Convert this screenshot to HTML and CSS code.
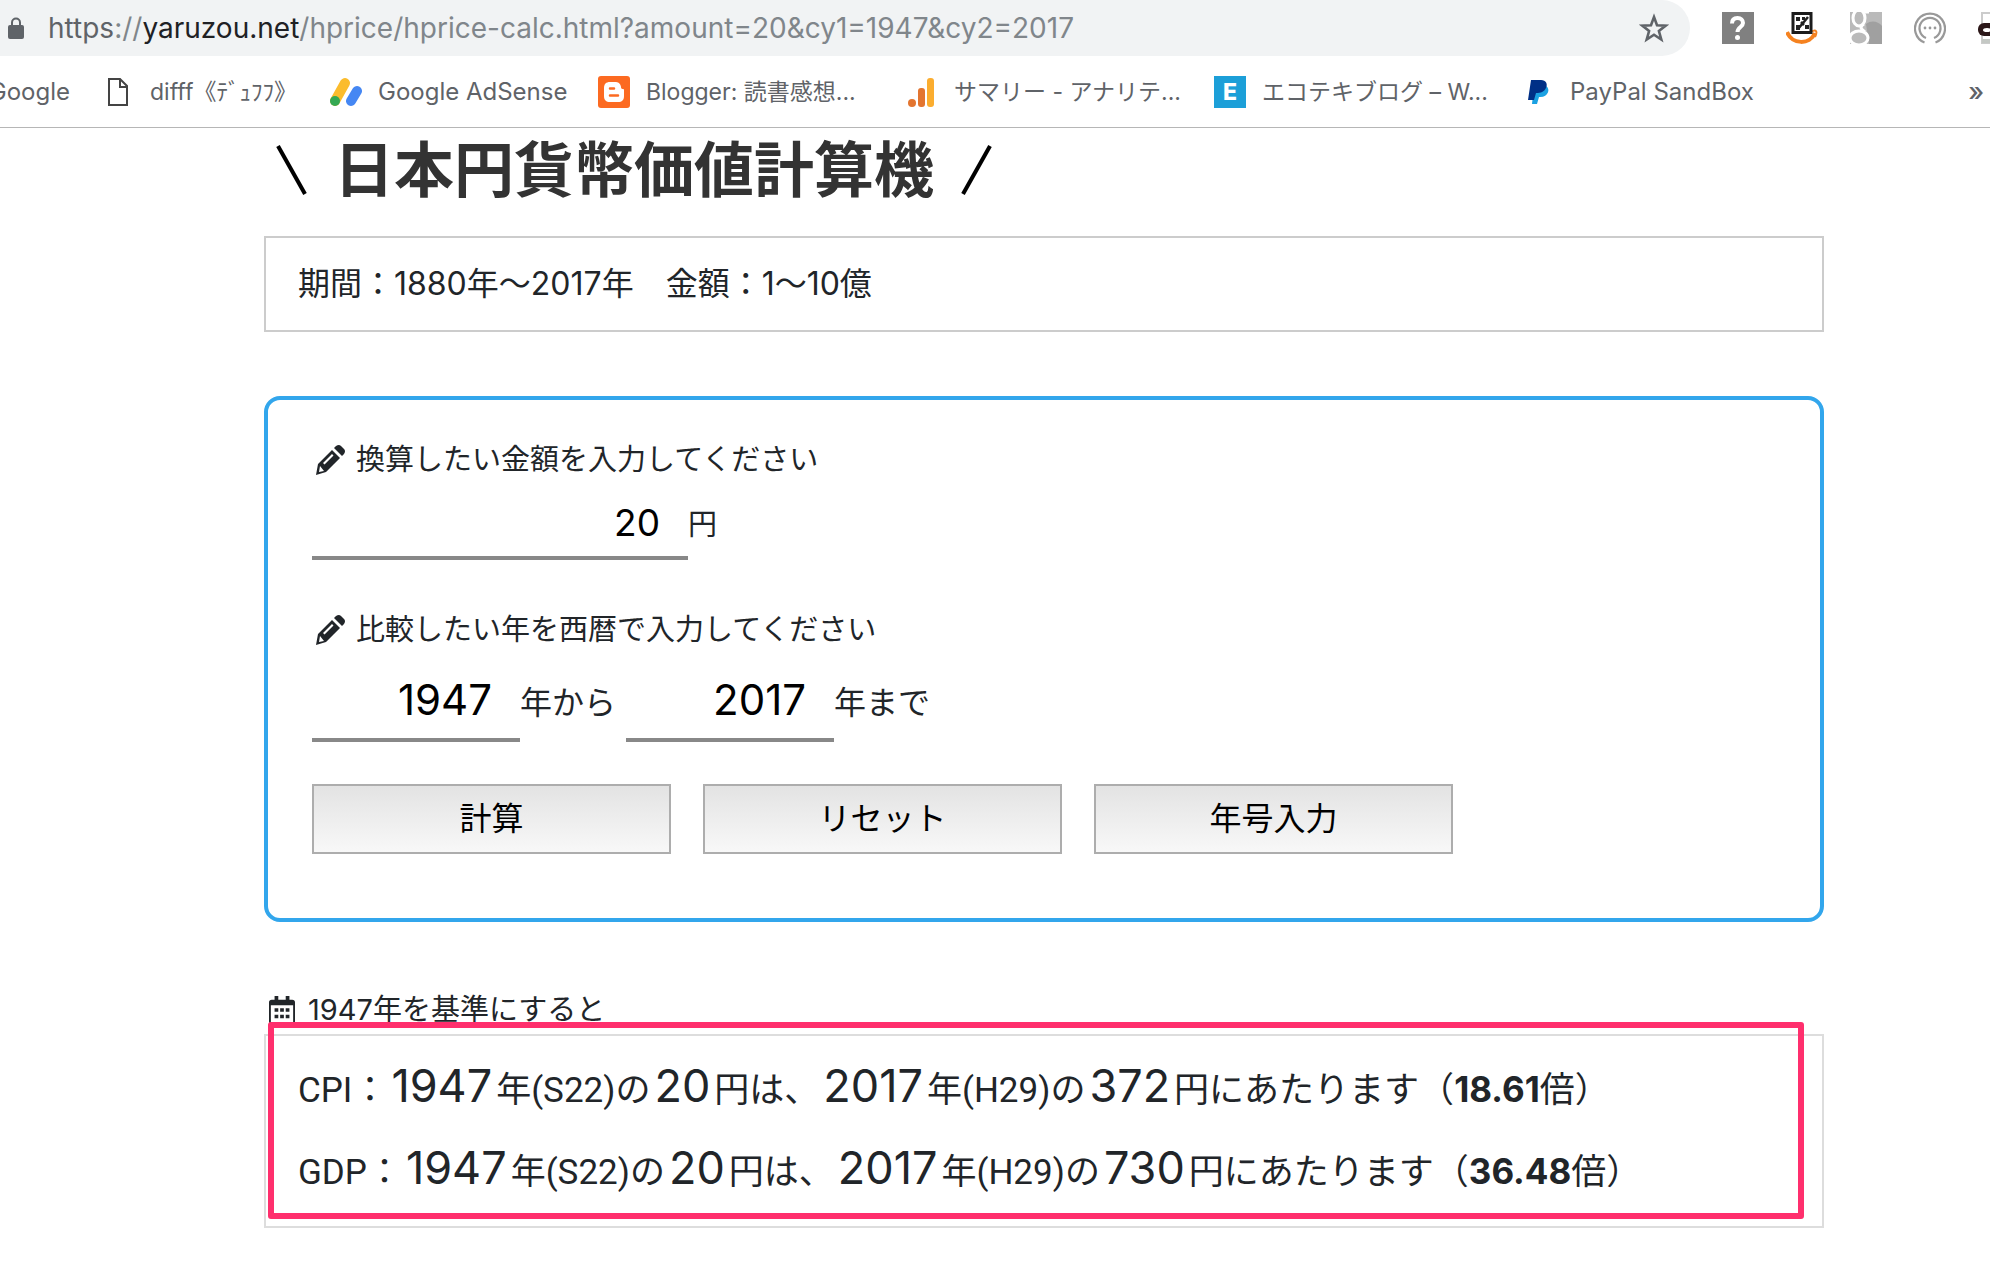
FILE: index.html
```html
<!DOCTYPE html>
<html lang="ja">
<head>
<meta charset="utf-8">
<title>日本円貨幣価値計算機</title>
<link rel="stylesheet" href="styles.css">
</head>
<body>
<header class="browser">
  <div class="toolbar">
    <div class="address">
      <svg class="lock" width="18" height="30" viewBox="0 0 18 30" aria-hidden="true"><path d="M4 14V9.500a4 4 0 0 1 8 0V14" fill="none" stroke="#5f6368" stroke-width="2"/><rect x="0" y="12" width="16" height="14" rx="2" fill="#5f6368"/></svg>
      <span class="url"><span class="scheme">https</span>://<span class="host">yaruzou.net</span>/hprice/hprice-calc.html?amount=20&amp;cy1=1947&amp;cy2=2017</span>
      <svg class="star" width="30" height="30" viewBox="0 0 30 30" aria-hidden="true"><path d="M15 4l3 8.200 8.700.4-6.800 5.400 2.400 8.500L15 21.700l-7.300 4.800L10.100 18l-6.800-5.400 8.700-.4z" fill="none" stroke="#5f6368" stroke-width="2.600"/></svg>
    </div>
    <div class="extensions">
      <svg width="32" height="32" viewBox="0 0 32 32" aria-hidden="true"><path d="M0 0h32v32H0z" fill="#808080"/><path d="M10 11.500c0-3.500 2-5.500 5.500-5.500s5.500 2 5.500 5c0 4-5.500 4-5.500 9" fill="none" stroke="#fff" stroke-width="4"/><circle cx="15.500" cy="25.500" r="2.500" fill="#fff"/></svg>
      <svg width="32" height="32" viewBox="0 0 32 32" aria-hidden="true"><path d="M1 20c5 13 23 13 28 1" fill="none" stroke="#f58220" stroke-width="4"/><path d="M25 20c5-3 7-1 4 5" fill="none" stroke="#f58220" stroke-width="2"/><rect x="7" y="1.500" width="18" height="19" fill="#fff" stroke="#1c1c1c" stroke-width="3"/><path d="M10 5h4v4h-4zM16 5h3v3h-3zM10 13h4v5h-4zM19 13h4v4h-4z" fill="#222"/><path d="M22 5L12 17M15 10l3 3" stroke="#222" stroke-width="2.500"/></svg>
      <svg width="32" height="32" viewBox="0 0 32 32" aria-hidden="true"><path d="M0 0h32v32H0z" fill="#bababa"/><path d="M16 12c5-4 12-3 16 2v18H19z" fill="#a0a0a0"/><ellipse cx="9" cy="6" rx="6" ry="8" fill="#bababa" stroke="#fff" stroke-width="3"/><ellipse cx="9" cy="26" rx="9" ry="7" fill="#bababa" stroke="#fff" stroke-width="3"/><path d="M13 0h6M14 12c-5 3-3 5 1 8" fill="none" stroke="#fff" stroke-width="3"/></svg>
      <svg width="32" height="32" viewBox="0 0 32 32" aria-hidden="true"><g fill="none" stroke="#999" stroke-width="2.200"><path d="M10.500 30.500a15 15 0 1 1 11 0"/><path d="M12 26a10.500 10.500 0 1 1 8 0"/></g><g fill="#999"><circle cx="11" cy="16" r="1.400"/><circle cx="16" cy="16" r="1.400"/><circle cx="21" cy="16" r="1.400"/></g></svg>
      <svg width="32" height="32" viewBox="0 0 32 32" aria-hidden="true"><path d="M4 1h28v30H4z" fill="#fff" stroke="#ccc" stroke-width="2"/><path d="M4 27h28v4H4z" fill="#c4c8c4"/><rect x="0" y="11" width="32" height="13" rx="6" fill="#2b1718"/><ellipse cx="9" cy="18" rx="4" ry="2" fill="#fff"/></svg>
    </div>
  </div>
  <nav class="bookmarks" aria-label="ブックマーク">
    <a class="bm bm-google" href="#">Google</a>
    <a class="bm bm-jp bm-difff" href="#"><svg width="32" height="32" viewBox="0 0 32 32" aria-hidden="true"><path d="M7 3h11l7 7v19H7zM18 3v8h7" fill="none" stroke="#444" stroke-width="2"/></svg><span>difff《ﾃﾞｭﾌﾌ》</span></a>
    <a class="bm bm-adsense" href="#"><svg width="32" height="32" viewBox="0 0 32 32" aria-hidden="true"><path d="M5 25L15 7" stroke="#fbbc2d" stroke-width="10" stroke-linecap="round"/><path d="M21 25l6-10" stroke="#4587f3" stroke-width="10" stroke-linecap="round"/><circle cx="5" cy="25" r="5" fill="#34a853"/></svg><span>Google AdSense</span></a>
    <a class="bm bm-jp bm-cut" href="#"><svg width="32" height="32" viewBox="0 0 32 32" aria-hidden="true"><rect width="32" height="32" rx="3" fill="#fc6a21"/><path d="M12 6h6c3 0 5 3 5 5 0 3 3 1 3 3v6c0 4-2 6-6 6h-8c-4 0-6-2-6-6v-8c0-4 2-6 6-6z" fill="#fff"/><path d="M12 12.500h4M12 19.500h8" stroke="#fc6a21" stroke-width="2.500" stroke-linecap="round"/></svg><span>Blogger: 読書感想...</span></a>
    <a class="bm bm-jp bm-cut" href="#"><svg width="32" height="32" viewBox="0 0 32 32" aria-hidden="true"><circle cx="6" cy="27" r="4" fill="#e37530"/><rect x="12" y="12" width="7" height="19" rx="3" fill="#e37530"/><rect x="21" y="2" width="7" height="29" rx="3" fill="#fbad2f"/></svg><span>サマリー - アナリテ...</span></a>
    <a class="bm bm-jp bm-cut" href="#"><span class="e-badge">E</span><span>エコテキブログ – W...</span></a>
    <a class="bm bm-paypal" href="#"><svg width="32" height="32" viewBox="0 0 32 32" aria-hidden="true"><path d="M12 10h12c5 3 2 12-7 11l-2 7h-5z" fill="#1ba1e2"/><path d="M9 4h10c5 0 7 4 5 8-2 4-5 5-10 5l-2 7H6z" fill="#002f86"/></svg><span>PayPal SandBox</span></a>
    <button class="more" type="button" aria-label="他のブックマーク">»</button>
  </nav>
</header>
<main class="page">
  <h1 class="title"><svg width="32" height="52" viewBox="0 0 32 52" aria-hidden="true"><path d="M2 2l27 48" stroke="#000" stroke-width="4"/></svg><span>日本円貨幣価値計算機</span><svg width="32" height="52" viewBox="0 0 32 52" aria-hidden="true"><path d="M30 2L3 50" stroke="#000" stroke-width="4"/></svg></h1>
  <p class="range">期間：1880年〜2017年　金額：1〜10億</p>
  <form class="calc">
    <label class="prompt" for="amount"><svg width="32" height="32" viewBox="0 0 32 32" aria-hidden="true"><use href="#pencil"/></svg><span>換算したい金額を入力してください</span></label>
    <div class="row row-amount"><input class="field field-amount" id="amount" type="text" value="20"><label class="unit" for="amount">円</label></div>
    <label class="prompt" for="from"><svg width="32" height="32" viewBox="0 0 32 32" aria-hidden="true"><g id="pencil" fill="#212529"><path fill-rule="evenodd" d="M18 6l8 8L12 28l-10 3 2-11zM6 22l-1 6 5-1zM18 10L9 19l1.500 1.500 9-9z"/><path d="M20 4l2-2q3-2 5 0l3 3q2 2 0 5l-2 2z"/></g></svg><span>比較したい年を西暦で入力してください</span></label>
    <div class="row row-year"><input class="field field-year" id="from" type="text" value="1947"><label class="unit unit-from" for="from">年から</label><input class="field field-year" id="to" type="text" value="2017"><label class="unit" for="to">年まで</label></div>
    <div class="buttons"><button type="button">計算</button><button type="button">リセット</button><button type="button">年号入力</button></div>
  </form>
  <section class="results">
    <h2 class="basis"><svg width="26" height="28" viewBox="0 0 28 30" aria-hidden="true"><path fill="#212529" fill-rule="evenodd" d="M6 0h4v4h8V0h4v4h3q3 0 3 3v20q0 3-3 3H3q-3 0-3-3V7q0-3 3-3h3zM2 10v18h24V10z"/><path fill="#212529" d="M6 13h4v4H6zM12 13h4v4h-4zM18 13h4v4h-4zM6 20h4v4H6zM12 20h4v4h-4zM18 20h4v4h-4z"/></svg><span>1947年を基準にすると</span></h2>
    <div class="outcome">
      <p>CPI：<span class="num">1947</span>年(S22)の<span class="num">20</span>円は、<span class="num">2017</span>年(H29)の<span class="num">372</span>円にあたります（<b>18.61</b>倍）</p>
      <p>GDP：<span class="num">1947</span>年(S22)の<span class="num">20</span>円は、<span class="num">2017</span>年(H29)の<span class="num">730</span>円にあたります（<b>36.48</b>倍）</p>
      <div class="highlight"></div>
    </div>
  </section>
</main>
</body>
</html>
```
FILE: styles.css
```css
* { box-sizing: border-box; }
body {
  margin: 0;
  min-height: 100vh;
  overflow-x: hidden;
  background: #fff;
  color: #212529;
  font-family: Inter, "Noto Sans CJK JP", sans-serif;
}
svg { flex: none; display: block; }

.browser { border-bottom: 1px solid #b6b6b6; overflow: hidden; }
.toolbar { display: flex; height: 56px; }
.address {
  flex: 1;
  display: flex;
  align-items: center;
  padding: 0 21px 0 8px;
  border-radius: 0 28px 28px 0;
  background: #f1f3f4;
}
.url { flex: 1; margin-left: 22px; color: #80868b; font-size: 28px; line-height: 56px; white-space: nowrap; }
.scheme { color: #5f6368; }
.host { color: #202124; }
.extensions { display: flex; align-items: center; gap: 32px; width: 300px; padding-left: 32px; overflow: hidden; }

.bookmarks { display: flex; align-items: center; gap: 32px; height: 71px; white-space: nowrap; }
.bm { display: flex; flex: none; align-items: center; gap: 16px; color: #5f6368; font-size: 24px; line-height: 32px; text-decoration: none; }
.bm-jp { font-size: 23px; }
.bm-google { width: 70px; justify-content: flex-end; }
.bm-difff { width: 196px; }
.bm-adsense { width: 236px; }
.bm-cut { width: 276px; }
.e-badge { width: 32px; height: 32px; background: #1c9fd8; color: #fff; font-weight: 800; text-align: center; }
.more { margin-left: auto; padding: 0 6px; border: 0; background: none; color: #5f6368; font: 500 26px Inter, sans-serif; }

.page { width: 1560px; max-width: 79%; margin-left: 264px; }
.title { display: flex; align-items: center; gap: 26px; margin: 12px 0 36px 12px; color: #333; font-size: 60px; line-height: 60px; }
.range { margin: 0; padding: 24px 32px; border: 2px solid #ccc; font-size: 32px; line-height: 44px; }

.calc { margin-top: 64px; padding: 42px 44px 64px; border: 4px solid #32a6ec; border-radius: 16px; }
.prompt { display: flex; align-items: center; gap: 10px; padding-left: 2px; font-size: 29px; line-height: 36px; }
.row { display: flex; align-items: center; }
.row-amount { margin: 10px 0 52px; font-size: 29px; }
.row-year { margin-top: 14px; font-size: 32px; }
.field { border: 0; border-bottom: 4px solid #888; border-radius: 0; padding: 0 28px; background: none; color: #000; text-align: right; font-family: inherit; }
.field-amount { width: 376px; height: 72px; font-size: 37px; }
.field-year { width: 208px; height: 80px; padding-bottom: 2px; font-size: 42px; }
.unit { padding-bottom: 4px; }
.unit-from { margin-right: 10px; }
.buttons { display: flex; gap: 32px; margin-top: 42px; }
.buttons button { width: 359px; height: 70px; padding: 0 0 6px; border: 2px solid #adadad; background: linear-gradient(#e3e3e3, #f8f8f8); color: #000; font: 32px Inter, "Noto Sans CJK JP", sans-serif; }

.results { margin-top: 70px; }
.basis { display: flex; align-items: center; gap: 13px; margin: 0; padding-left: 5px; font-size: 29px; font-weight: 400; line-height: 36px; }
.outcome { position: relative; margin-top: 6px; padding: 14px 32px 12px; border: 2px solid #ddd; }
.outcome p { height: 82px; margin: 0; font-family: Roboto, "Noto Sans CJK JP", sans-serif; font-size: 35px; line-height: 82px; white-space: nowrap; }
.num, .outcome b { font-family: Inter, sans-serif; line-height: 1; }
.num { margin: 0 4px; font-size: 45px; }
.highlight { position: absolute; inset: -14px 18px 7px 2px; border: 6px solid #ff2f6d; border-radius: 3px; }
```
